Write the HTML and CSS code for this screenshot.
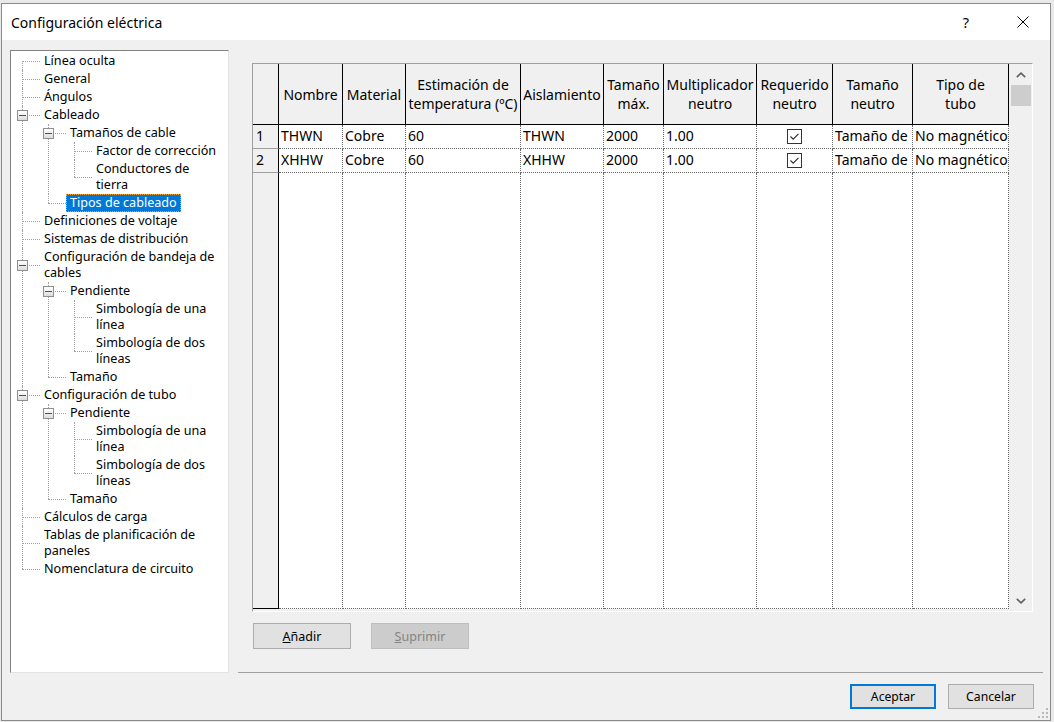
FILE: index.html
```html
<!DOCTYPE html>
<html lang="es">
<head>
<meta charset="utf-8">
<title>Configuración eléctrica</title>
<link rel="stylesheet" href="styles.css">
</head>
<body>
<div class="dialog">
  <div class="titlebar">
    <span class="title">Configuración eléctrica</span>
    <span class="tb-btn help">?</span>
    <span class="tb-btn close">
      <svg width="12" height="12" viewBox="0 0 12 12"><path d="M0.5 0.5 L11.5 11.5 M11.5 0.5 L0.5 11.5" stroke="#000" stroke-width="1" fill="none"/></svg>
    </span>
  </div>
  <div class="client">
    <div class="main">
      <div class="tree">
        <ul class="root">
          <li><div class="label"><span class="text">Línea oculta</span></div></li>
          <li><div class="label"><span class="text">General</span></div></li>
          <li><div class="label"><span class="text">Ángulos</span></div></li>
          <li><div class="label"><span class="box"></span><span class="text">Cableado</span></div>
            <ul>
              <li><div class="label"><span class="box"></span><span class="text">Tamaños de cable</span></div>
                <ul>
                  <li><div class="label"><span class="text">Factor de corrección</span></div></li>
                  <li><div class="label"><span class="text">Conductores de<br>tierra</span></div></li>
                </ul>
              </li>
              <li><div class="label"><span class="text selected">Tipos de cableado</span></div></li>
            </ul>
          </li>
          <li><div class="label"><span class="text">Definiciones de voltaje</span></div></li>
          <li><div class="label"><span class="text">Sistemas de distribución</span></div></li>
          <li><div class="label"><span class="box"></span><span class="text">Configuración de bandeja de<br>cables</span></div>
            <ul>
              <li><div class="label"><span class="box"></span><span class="text">Pendiente</span></div>
                <ul>
                  <li><div class="label"><span class="text">Simbología de una<br>línea</span></div></li>
                  <li><div class="label"><span class="text">Simbología de dos<br>líneas</span></div></li>
                </ul>
              </li>
              <li><div class="label"><span class="text">Tamaño</span></div></li>
            </ul>
          </li>
          <li><div class="label"><span class="box"></span><span class="text">Configuración de tubo</span></div>
            <ul>
              <li><div class="label"><span class="box"></span><span class="text">Pendiente</span></div>
                <ul>
                  <li><div class="label"><span class="text">Simbología de una<br>línea</span></div></li>
                  <li><div class="label"><span class="text">Simbología de dos<br>líneas</span></div></li>
                </ul>
              </li>
              <li><div class="label"><span class="text">Tamaño</span></div></li>
            </ul>
          </li>
          <li><div class="label"><span class="text">Cálculos de carga</span></div></li>
          <li><div class="label"><span class="text">Tablas de planificación de<br>paneles</span></div></li>
          <li><div class="label"><span class="text">Nomenclatura de circuito</span></div></li>
        </ul>
      </div>
      <div class="right">
        <div class="gridbox">
          <div class="sheet">
            <div class="hc"></div>
            <div class="hc">Nombre</div>
            <div class="hc">Material</div>
            <div class="hc">Estimación de<br>temperatura (ºC)</div>
            <div class="hc">Aislamiento</div>
            <div class="hc">Tamaño<br>máx.</div>
            <div class="hc">Multiplicador<br>neutro</div>
            <div class="hc">Requerido<br>neutro</div>
            <div class="hc">Tamaño<br>neutro</div>
            <div class="hc">Tipo de<br>tubo</div>

            <div class="rh">1</div>
            <div class="dc">THWN</div>
            <div class="dc">Cobre</div>
            <div class="dc">60</div>
            <div class="dc">THWN</div>
            <div class="dc">2000</div>
            <div class="dc">1.00</div>
            <div class="dc check"><svg width="15" height="15" viewBox="0 0 15 15"><rect x="0.5" y="0.5" width="14" height="14" fill="#fff" stroke="#333"/><path d="M3.5 7.5 L6.2 10.2 L11.5 4.8" fill="none" stroke="#333" stroke-width="1.2"/></svg></div>
            <div class="dc">Tamaño de</div>
            <div class="dc">No magnético</div>

            <div class="rh">2</div>
            <div class="dc">XHHW</div>
            <div class="dc">Cobre</div>
            <div class="dc">60</div>
            <div class="dc">XHHW</div>
            <div class="dc">2000</div>
            <div class="dc">1.00</div>
            <div class="dc check"><svg width="15" height="15" viewBox="0 0 15 15"><rect x="0.5" y="0.5" width="14" height="14" fill="#fff" stroke="#333"/><path d="M3.5 7.5 L6.2 10.2 L11.5 4.8" fill="none" stroke="#333" stroke-width="1.2"/></svg></div>
            <div class="dc">Tamaño de</div>
            <div class="dc">No magnético</div>

            <div class="rh last"></div>
            <div class="dc"></div>
            <div class="dc"></div>
            <div class="dc"></div>
            <div class="dc"></div>
            <div class="dc"></div>
            <div class="dc"></div>
            <div class="dc"></div>
            <div class="dc"></div>
            <div class="dc"></div>
          </div>
          <div class="vscroll">
            <div class="arrow"><svg width="10" height="6" viewBox="0 0 10 6"><path d="M0.8 5.2 L5 1.2 L9.2 5.2" fill="none" stroke="#606060" stroke-width="1.6"/></svg></div>
            <div class="thumb"></div>
            <div class="track"></div>
            <div class="arrow"><svg width="10" height="6" viewBox="0 0 10 6"><path d="M0.8 0.8 L5 4.8 L9.2 0.8" fill="none" stroke="#606060" stroke-width="1.6"/></svg></div>
          </div>
        </div>
        <div class="actions">
          <button class="btn"><u>A</u>ñadir</button>
          <button class="btn disabled"><u>S</u>uprimir</button>
        </div>
      </div>
    </div>
    <div class="footer">
      <button class="btn2 default">Aceptar</button>
      <button class="btn2">Cancelar</button>
    </div>
  </div>
  <svg class="grip" width="12" height="12" viewBox="0 0 12 12">
    <rect x="9" y="1" width="2" height="2" fill="#b8b8b8"/>
    <rect x="9" y="5" width="2" height="2" fill="#b8b8b8"/>
    <rect x="5" y="5" width="2" height="2" fill="#b8b8b8"/>
    <rect x="9" y="9" width="2" height="2" fill="#b8b8b8"/>
    <rect x="5" y="9" width="2" height="2" fill="#b8b8b8"/>
    <rect x="1" y="9" width="2" height="2" fill="#b8b8b8"/>
  </svg>
</div>
</body>
</html>
```

FILE: styles.css
```css
* { box-sizing: border-box; }
html, body { margin: 0; }
body {
  padding: 3px 0 0 1px;
  background: #e9e9e9;
  font-family: "Noto Sans", sans-serif;
  color: #000;
}
.dialog {
  position: relative;
  width: 1050px;
  height: 718px;
  border: 1px solid #8a8a8a;
  background: #f0f0f0;
  display: flex;
  flex-direction: column;
}
.titlebar {
  height: 36px;
  flex: none;
  background: #fff;
  display: flex;
  align-items: center;
  padding-left: 9px;
  padding-right: 4px;
}
.title { font-size: 14px; }
.tb-btn {
  width: 46px;
  height: 36px;
  display: flex;
  align-items: center;
  justify-content: center;
}
.help { margin-left: auto; margin-right: 11px; font-size: 14.5px; }
.client { flex: 1; display: flex; flex-direction: column; }
.main { display: flex; padding: 10px 0 0 8px; flex: none; }

/* tree */
.tree {
  width: 219px;
  height: 623px;
  background: #fff;
  border: 1px solid;
  border-color: #828282 #e3e3e3 #e3e3e3 #828282;
  font-size: 12.6px;
  overflow: hidden;
  padding-top: 1px;
}
.tree ul { list-style: none; margin: 0; padding: 0 0 0 26px; }
.tree ul.root { padding-left: 0; }
.tree li { position: relative; }
.tree li::before {
  content: "";
  position: absolute;
  left: 11px;
  top: 0;
  bottom: 0;
  border-left: 1px dotted #a0a0a0;
}
.tree ul.root > li:first-child::before { top: 9px; }
.tree li:last-child::before { display: none; }
.label {
  position: relative;
  display: flex;
  padding-left: 29px;
}
.label::after {
  content: "";
  position: absolute;
  left: 11px;
  width: 18px;
  top: 50%;
  border-top: 1px dotted #a0a0a0;
}
.tree li:last-child > .label::before {
  content: "";
  position: absolute;
  left: 11px;
  top: 0;
  height: 50%;
  border-left: 1px dotted #a0a0a0;
}
.tree ul.root > li:first-child > .label::before { display: none; }
.text {
  border: 1px solid transparent;
  padding: 0 3px;
  line-height: 16px;
  white-space: nowrap;
}
.text.selected {
  background: #0078d7;
  color: #fff;
  border: 1px dotted #f2a23c;
}
.box {
  position: absolute;
  left: 6px;
  top: calc(50% - 5px);
  width: 11px;
  height: 11px;
  border: 1px solid #8e8f8f;
  background: linear-gradient(#ffffff, #dcdcdc);
  z-index: 1;
}
.box::after {
  content: "";
  position: absolute;
  left: 1px;
  right: 1px;
  top: 4px;
  border-top: 1px solid #3d4e8c;
}

/* right side */
.right {
  margin-left: 9px;
  width: 805px;
  height: 623px;
  border-bottom: 1px solid #a0a0a0;
  padding: 13px 0 0 14px;
}
.gridbox {
  width: 781px;
  height: 549px;
  border: 1px solid;
  border-color: #a0a0a0 #ffffff #ffffff #a0a0a0;
  display: flex;
  align-items: stretch;
  background: #f0f0f0;
}
.sheet {
  width: 756px;
  height: 545px;
  flex: none;
  display: grid;
  grid-template-columns: 26px 64px 63px 115px 83px 60px 93px 76px 80px 96px;
  grid-template-rows: 61px 24px 24px 436px;
}
.hc {
  background: #f0f0f0;
  border-right: 1px solid #000;
  border-bottom: 1px solid #000;
  display: flex;
  align-items: center;
  justify-content: center;
  text-align: center;
  font-size: 14px;
  line-height: 19px;
  white-space: nowrap;
  overflow: hidden;
}
.rh {
  background: #f0f0f0;
  border-right: 1px solid #000;
  border-bottom: 1px solid #a0a0a0;
  font-size: 14px;
  line-height: 21px;
  padding-left: 3px;
}
.rh.last { border-bottom-color: #000; }
.dc {
  background: #fff;
  border-right: 1px dotted #6b6b6b;
  border-bottom: 1px dotted #6b6b6b;
  font-size: 14px;
  line-height: 21px;
  padding-left: 2px;
  white-space: nowrap;
  overflow: hidden;
}
.dc.check {
  display: flex;
  align-items: center;
  justify-content: center;
  padding-left: 0;
}
.vscroll {
  width: 23px;
  flex: none;
  display: flex;
  flex-direction: column;
  background: #f0f0f0;
}
.arrow {
  height: 21px;
  flex: none;
  display: flex;
  align-items: center;
  justify-content: center;
}
.thumb {
  height: 21px;
  flex: none;
  margin: 0 1px 0 2px;
  background: #cdcdcd;
}
.track { flex: 1; }
.actions {
  display: flex;
  gap: 20px;
  margin-top: 11px;
  padding-left: 1px;
}
.btn {
  width: 98px;
  height: 26px;
  background: #e1e1e1;
  border: 1px solid #adadad;
  font-family: "Noto Sans", sans-serif;
  font-size: 12.5px;
  color: #000;
  padding: 0;
}
.btn.disabled {
  background: #cccccc;
  border-color: #bfbfbf;
  color: #838383;
}
.footer {
  display: flex;
  justify-content: flex-end;
  gap: 12px;
  padding: 11px 16px 0 0;
}
.btn2 {
  width: 86px;
  height: 25px;
  background: #e1e1e1;
  border: 1px solid #adadad;
  font-family: "Noto Sans", sans-serif;
  font-size: 12.2px;
  color: #000;
  padding: 0;
}
.btn2.default { border: 2px solid #0078d7; }
.grip {
  position: absolute;
  right: 1px;
  bottom: 1px;
}
```
